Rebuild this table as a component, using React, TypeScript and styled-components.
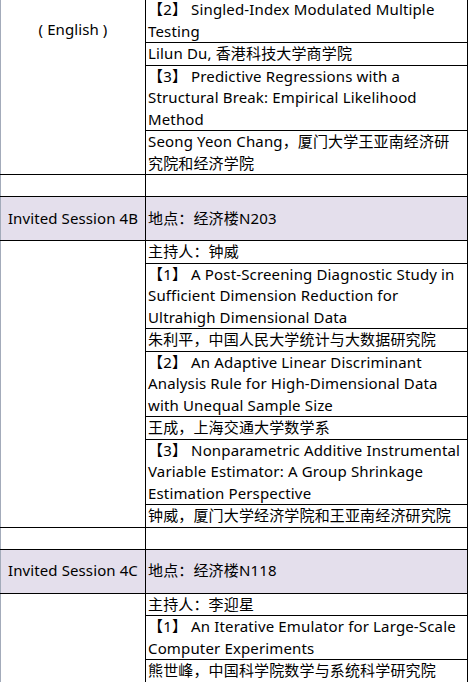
import * as React from 'react';
import styled, { createGlobalStyle } from 'styled-components';

const GlobalStyle = createGlobalStyle`
  html, body {
    margin: 0;
    padding: 0;
    background: #ffffff;
  }
  body {
    font-family: 'Noto Sans', 'Noto Sans CJK SC', sans-serif;
    color: #000000;
  }
`;

const Viewport = styled.div`
  width: 470px;
  height: 682px;
  overflow: hidden;
`;

const Table = styled.table`
  width: 468px;
  margin-top: -2px;
  border-collapse: collapse;
  table-layout: fixed;
  font-size: 15px;
  line-height: 21.5px;
`;

const LabelCell = styled.td<{ $tint?: boolean; $top?: boolean }>`
  width: 144px;
  padding: ${(p) => (p.$top ? '20px 0 0' : '0')};
  border: 1px solid #000;
  border-left: 1px solid #a3abba;
  text-align: center;
  vertical-align: ${(p) => (p.$top ? 'top' : 'middle')};
  background: ${(p) => (p.$tint ? '#e4dfec' : '#ffffff')};
  white-space: nowrap;
  letter-spacing: 0.1px;
`;

const TextCell = styled.td<{ $tint?: boolean; $tall?: boolean }>`
  padding: 0 3px 0 2px;
  border: 1px solid #000;
  vertical-align: middle;
  height: ${(p) => (p.$tall ? '43px' : 'auto')};
  background: ${(p) => (p.$tint ? '#e4dfec' : '#ffffff')};
  letter-spacing: 0.15px;
`;

const EmptyRow = styled.tr`
  height: 22px;
`;

type Entry = { title: string; author: string };

const Paper = ({ title, author }: Entry) => (
  <>
    <tr>
      <TextCell>{title}</TextCell>
    </tr>
    <tr>
      <TextCell>{author}</TextCell>
    </tr>
  </>
);

const session4B: Entry[] = [
  {
    title: '【1】 A Post-Screening Diagnostic Study in Sufficient Dimension Reduction for Ultrahigh Dimensional Data',
    author: '朱利平，中国人民大学统计与大数据研究院',
  },
  {
    title: '【2】 An Adaptive Linear Discriminant Analysis Rule for High-Dimensional Data with Unequal Sample Size',
    author: '王成，上海交通大学数学系',
  },
  {
    title: '【3】 Nonparametric Additive Instrumental Variable Estimator: A Group Shrinkage Estimation Perspective',
    author: '钟威，厦门大学经济学院和王亚南经济研究院',
  },
];

const session4C: Entry[] = [
  {
    title: '【1】 An Iterative Emulator for Large-Scale Computer Experiments',
    author: '熊世峰，中国科学院数学与系统科学研究院',
  },
];

export default function App() {
  return (
    <Viewport>
      <GlobalStyle />
      <Table>
        <tbody>
          <tr>
            <LabelCell rowSpan={4} $top>
              ( English )
            </LabelCell>
            <TextCell>【2】 Singled-Index Modulated Multiple Testing</TextCell>
          </tr>
          <tr>
            <TextCell>Lilun Du, 香港科技大学商学院</TextCell>
          </tr>
          <tr>
            <TextCell>【3】 Predictive Regressions with a Structural Break: Empirical Likelihood Method</TextCell>
          </tr>
          <tr>
            <TextCell>Seong Yeon Chang，厦门大学王亚南经济研究院和经济学院</TextCell>
          </tr>
          <EmptyRow>
            <LabelCell />
            <TextCell />
          </EmptyRow>
          <tr>
            <LabelCell $tint>Invited Session 4B</LabelCell>
            <TextCell $tint $tall>
              地点：经济楼N203
            </TextCell>
          </tr>
          <tr>
            <LabelCell rowSpan={1 + session4B.length * 2} />
            <TextCell>主持人：钟威</TextCell>
          </tr>
          {session4B.map((p) => (
            <Paper key={p.title} {...p} />
          ))}
          <EmptyRow>
            <LabelCell />
            <TextCell />
          </EmptyRow>
          <tr>
            <LabelCell $tint>Invited Session 4C</LabelCell>
            <TextCell $tint $tall>
              地点：经济楼N118
            </TextCell>
          </tr>
          <tr>
            <LabelCell rowSpan={2 + session4C.length * 2} />
            <TextCell>主持人：李迎星</TextCell>
          </tr>
          {session4C.map((p) => (
            <Paper key={p.title} {...p} />
          ))}
          <EmptyRow>
            <TextCell />
          </EmptyRow>
        </tbody>
      </Table>
    </Viewport>
  );
}
